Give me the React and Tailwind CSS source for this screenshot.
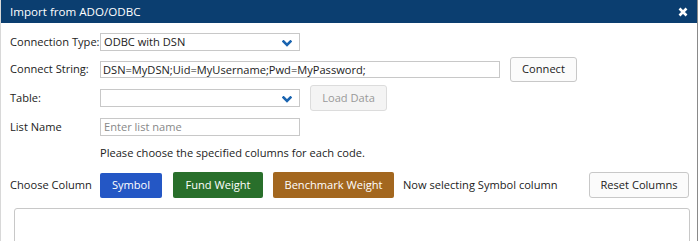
import React from 'react';

function Chevron() {
  return (
    <svg width="10" height="7" viewBox="0 0 10 7" className="absolute right-[7px] top-[6px]">
      <polyline points="1.5,1.5 5,5 8.5,1.5" fill="none" stroke="#1a64b0" strokeWidth="2.6" strokeLinecap="square" />
    </svg>
  );
}

function Select({ value }) {
  return (
    <div className="relative w-[200px] h-[18px] border border-[#c8c8c8] bg-white pl-[3px] leading-[16px] text-[#222]">
      {value}
      <Chevron />
    </div>
  );
}

export default function App() {
  return (
    <div className="w-[700px] h-[241px] overflow-hidden bg-white font-['Open_Sans',sans-serif] text-[11.1px] text-[#222]">
      <div className="w-[698px] h-[241px] border-l border-r border-l-[#d8d8d8] border-r-[#8a8a8a]">
        {/* Title bar */}
        <div className="h-[23px] bg-[#0b3e70] flex items-center justify-between pl-[9px] pr-[9px] text-white text-[11.6px]">
          <span>Import from ADO/ODBC</span>
          <svg width="10" height="10" viewBox="0 0 10 10">
            <path d="M1.5 1.5 L8.5 8.5 M8.5 1.5 L1.5 8.5" stroke="#fff" strokeWidth="2.6" />
          </svg>
        </div>

        <div className="pl-[9px] pr-[8px]">
          <div className="flex items-center mt-[10px] h-[18px]">
            <span className="w-[90px] whitespace-nowrap">Connection Type:</span>
            <Select value="ODBC with DSN" />
          </div>

          <div className="flex items-center mt-[6px] h-[25px]">
            <span className="w-[90px]">Connect String:</span>
            <div className="w-[400px] h-[17px] border border-[#c8c8c8] pl-[2px] leading-[15px]">
              DSN=MyDSN;Uid=MyUsername;Pwd=MyPassword;
            </div>
            <button className="ml-[10px] w-[67px] h-[25px] border border-[#c8c8c8] rounded-[3px] bg-[#fbfbfb] text-[#222]">
              Connect
            </button>
          </div>

          <div className="flex items-center mt-[3px] h-[26px]">
            <span className="w-[90px]">Table:</span>
            <Select value="" />
            <button className="ml-[10px] w-[77px] h-[26px] border border-[#dcdcdc] rounded-[3px] bg-[#f4f4f4] text-[#999]">
              Load Data
            </button>
          </div>

          <div className="flex items-center mt-[7px] h-[18px]">
            <span className="w-[90px]">List Name</span>
            <div className="w-[200px] h-[18px] border border-[#c8c8c8] pl-[3px] leading-[16px] text-[#888]">
              Enter list name
            </div>
          </div>

          <div className="mt-[9px] h-[16px] leading-[16px] pl-[90px]">
            Please choose the specified columns for each code.
          </div>

          <div className="flex items-center mt-[11px] h-[26px]">
            <span className="w-[90px]">Choose Column</span>
            <button className="w-[62px] h-[25px] bg-[#2457c5] text-white rounded-[2px]">Symbol</button>
            <button className="ml-[11px] w-[90px] h-[26px] bg-[#296f2b] text-white rounded-[2px]">Fund Weight</button>
            <button className="ml-[10px] w-[121px] h-[26px] bg-[#a3671f] text-white rounded-[2px]">Benchmark Weight</button>
            <span className="ml-[9px]">Now selecting Symbol column</span>
            <button className="ml-auto w-[100px] h-[26px] border border-[#c8c8c8] rounded-[3px] bg-[#fbfbfb]">
              Reset Columns
            </button>
          </div>

          <div className="mt-[10px] ml-[4px] w-[676px] h-[60px] border border-[#c8c8c8] rounded-[3px]"></div>
        </div>
      </div>
    </div>
  );
}
